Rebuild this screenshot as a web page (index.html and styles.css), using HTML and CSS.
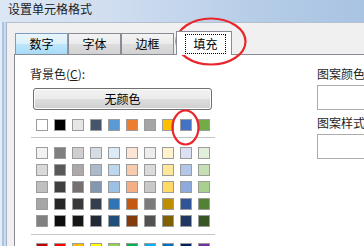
FILE: index.html
```html
<!DOCTYPE html>
<html lang="zh-CN">
<head>
<meta charset="utf-8">
<link rel="stylesheet" href="styles.css">
</head>
<body>
<div class="window">
  <div class="titlebar"><span class="title">设置单元格格式</span></div>
  <div class="frame">
    <div class="frame-left"></div>
    <div class="client">
      <div class="tabs">
        <div class="tab hot">数字</div>
        <div class="tab">字体</div>
        <div class="tab">边框</div>
        <div class="tab active"><span class="focus">填充</span></div>
      </div>
      <div class="page">
        <div class="left">
          <div class="label">背景色(<u>C</u>):</div>
          <div class="btn">无颜色</div>
          <div class="row">
            <i class="sw" style="background:#FFFFFF"></i><i class="sw" style="background:#000000"></i><i class="sw" style="background:#E7E6E6"></i><i class="sw" style="background:#44546A"></i><i class="sw" style="background:#5B9BD5"></i><i class="sw" style="background:#ED7D31"></i><i class="sw" style="background:#A5A5A5"></i><i class="sw" style="background:#FFC000"></i><i class="sw" style="background:#4472C4"></i><i class="sw" style="background:#70AD47"></i>
          </div>
          <div class="sep"></div>
          <div class="tints">
            <div class="row">
              <i class="sw" style="background:#F2F2F2"></i><i class="sw" style="background:#7F7F7F"></i><i class="sw" style="background:#D0CECE"></i><i class="sw" style="background:#D6DCE4"></i><i class="sw" style="background:#DDEBF7"></i><i class="sw" style="background:#FCE4D6"></i><i class="sw" style="background:#EDEDED"></i><i class="sw" style="background:#FFF2CC"></i><i class="sw" style="background:#D9E1F2"></i><i class="sw" style="background:#E2EFDA"></i>
            </div>
            <div class="row">
              <i class="sw" style="background:#D9D9D9"></i><i class="sw" style="background:#595959"></i><i class="sw" style="background:#AEAAAA"></i><i class="sw" style="background:#ACB9CA"></i><i class="sw" style="background:#BDD7EE"></i><i class="sw" style="background:#F8CBAD"></i><i class="sw" style="background:#DBDBDB"></i><i class="sw" style="background:#FFE699"></i><i class="sw" style="background:#B4C6E7"></i><i class="sw" style="background:#C6E0B4"></i>
            </div>
            <div class="row">
              <i class="sw" style="background:#BFBFBF"></i><i class="sw" style="background:#404040"></i><i class="sw" style="background:#757171"></i><i class="sw" style="background:#8497B0"></i><i class="sw" style="background:#9BC2E6"></i><i class="sw" style="background:#F4B084"></i><i class="sw" style="background:#C9C9C9"></i><i class="sw" style="background:#FFD966"></i><i class="sw" style="background:#8EA9DB"></i><i class="sw" style="background:#A9D08E"></i>
            </div>
            <div class="row">
              <i class="sw" style="background:#A6A6A6"></i><i class="sw" style="background:#262626"></i><i class="sw" style="background:#3A3838"></i><i class="sw" style="background:#333F4F"></i><i class="sw" style="background:#2F75B5"></i><i class="sw" style="background:#C65911"></i><i class="sw" style="background:#7B7B7B"></i><i class="sw" style="background:#BF8F00"></i><i class="sw" style="background:#305496"></i><i class="sw" style="background:#548235"></i>
            </div>
            <div class="row">
              <i class="sw" style="background:#808080"></i><i class="sw" style="background:#0D0D0D"></i><i class="sw" style="background:#161616"></i><i class="sw" style="background:#222B35"></i><i class="sw" style="background:#1F4E78"></i><i class="sw" style="background:#833C0C"></i><i class="sw" style="background:#525252"></i><i class="sw" style="background:#806000"></i><i class="sw" style="background:#203764"></i><i class="sw" style="background:#375623"></i>
            </div>
          </div>
          <div class="sep sep2"></div>
          <div class="row std">
            <i class="sw" style="background:#C00000"></i><i class="sw" style="background:#FF0000"></i><i class="sw" style="background:#FFC000"></i><i class="sw" style="background:#FFFF00"></i><i class="sw" style="background:#92D050"></i><i class="sw" style="background:#00B050"></i><i class="sw" style="background:#00B0F0"></i><i class="sw" style="background:#0070C0"></i><i class="sw" style="background:#002060"></i><i class="sw" style="background:#7030A0"></i>
          </div>
        </div>
        <div class="right">
          <div class="label">图案颜色</div>
          <div class="box"></div>
          <div class="label label2">图案样式</div>
          <div class="box"></div>
        </div>
      </div>
    </div>
  </div>
  <svg class="annot" width="364" height="246" viewBox="0 0 364 246">
    <ellipse cx="211" cy="41.5" rx="34.5" ry="23" fill="none" stroke="#e8262b" stroke-width="2.2"/>
    <ellipse cx="185.5" cy="127.5" rx="13" ry="17" fill="none" stroke="#e8262b" stroke-width="2.2"/>
  </svg>
</div>
</body>
</html>
```
FILE: styles.css
```css
* { box-sizing: border-box; margin: 0; padding: 0; }
html, body { width: 364px; height: 246px; overflow: hidden; }
body {
  font-family: "Noto Sans CJK SC", "Microsoft YaHei", sans-serif;
  font-size: 12px;
  color: #1e1e1e;
  background: #f0f0f0;
}
.window {
  position: relative;
  width: 364px;
  height: 246px;
  display: flex;
  flex-direction: column;
  overflow: hidden;
}
.titlebar {
  flex: none;
  height: 22px;
  padding-left: 8px;
  line-height: 18px;
  background: linear-gradient(to right, #dce7f4 0%, #cddcef 35%, #b3cbe6 75%, #a9c3e2 100%);
}
.title { color: #1a1a1a; font-size: 12px; }
.frame { flex: 1; display: flex; min-height: 0; }
.frame-left {
  width: 6px;
  flex: none;
  background: linear-gradient(to right, #e4ecf6 0, #e4ecf6 2px, #a9c4e4 2px, #a9c4e4 4px, #cbdaed 4px);
}
.client {
  flex: 1;
  display: flex;
  flex-direction: column;
  background: #f0f0f0;
  border-left: 1px solid #a3b1c2;
  border-top: 1px solid #b4c0cd;
  min-width: 0;
  overflow: hidden;
}
.tabs {
  flex: none;
  display: flex;
  align-items: flex-end;
  height: 31px;
  padding-top: 8px;
  margin-left: 8px;
}
.tab {
  width: 53px;
  height: 21px;
  border: 1px solid #898c95;
  border-bottom: none;
  text-align: center;
  line-height: 20px;
  color: #000;
  background: linear-gradient(#f3f3f3 0%, #ebebeb 50%, #dedede 51%, #d2d2d2 100%);
}
.tab.hot {
  border-color: #7b9ebe;
  background: linear-gradient(#eaf6fd 0%, #d9f0fc 50%, #bee6fd 51%, #a9daf6 100%);
}
.tab.active {
  position: relative;
  z-index: 1;
  width: 56px;
  height: 24px;
  margin-left: 2px;
  margin-bottom: -1px;
  padding: 2px 0 0 8px;
  background: #fff;
}
.focus {
  display: block;
  width: 41px;
  height: 20px;
  border: 1px dotted #000;
  line-height: 18px;
  text-align: center;
}
.page {
  flex: 1;
  display: flex;
  margin-left: 7px;
  background: #fff;
  border-top: 1px solid #898c95;
  border-left: 1px solid #898c95;
  overflow: hidden;
  min-width: 0;
}
.left {
  flex: none;
  width: 200px;
  padding: 11px 0 0 15px;
}
.label { height: 16px; line-height: 16px; color: #1e1e1e; white-space: nowrap; }
.label u { text-underline-offset: 1px; }
.btn {
  margin: 6px 0 0 3px;
  width: 179px;
  height: 22px;
  border: 1px solid #707070;
  border-radius: 3px;
  box-shadow: inset 0 0 0 1px #fcfcfc;
  background: linear-gradient(#f2f2f2 0%, #ebebeb 50%, #dddddd 51%, #cfcfcf 100%);
  text-align: center;
  line-height: 20px;
  color: #000;
}
.row {
  display: flex;
  gap: 6px;
  margin: 9px 0 0 6px;
}
.sw {
  display: block;
  width: 12px;
  height: 12px;
  border: 1px solid #9c9c9c;
}
.sep {
  margin: 6px 0 0 1px;
  width: 184px;
  height: 1px;
  background: #c6c6c6;
}
.tints {
  margin-top: 9px;
  display: flex;
  flex-direction: column;
  gap: 5px;
}
.tints .row { margin-top: 0; }
.sep2 { margin-top: 7px; }
.std { margin-top: 8px; }
.right {
  flex: 1;
  min-width: 0;
  margin-left: 102px;
  padding-top: 11px;
}
.box {
  margin-top: 3px;
  width: 60px;
  height: 25px;
  border: 1px solid #ababab;
  border-right: none;
  background: #fff;
}
.label2 { margin-top: 5px; }
.annot {
  position: absolute;
  left: 0;
  top: 0;
  pointer-events: none;
}
```
